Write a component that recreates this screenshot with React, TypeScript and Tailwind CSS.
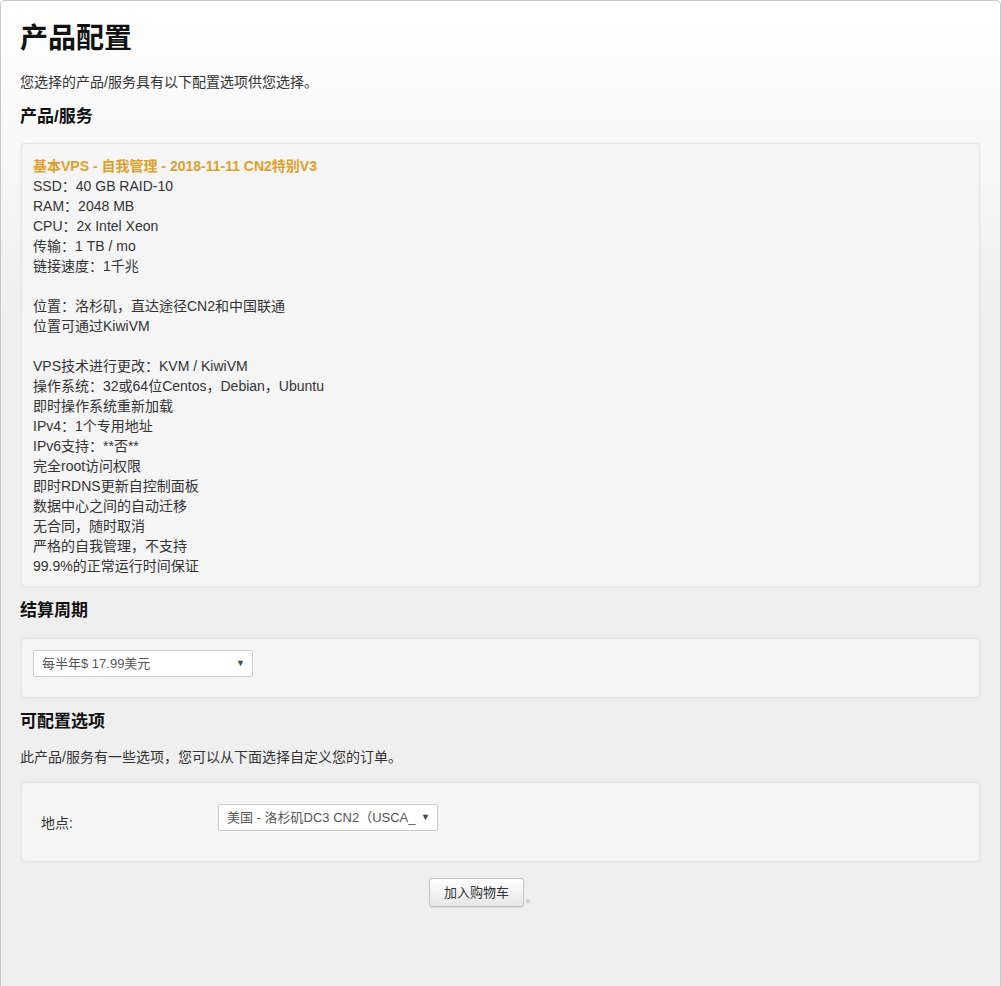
const font = { fontFamily: '"Liberation Sans", Arial, "Noto Sans CJK SC", sans-serif' };

const specs = [
  "SSD：40 GB RAID-10",
  "RAM：2048 MB",
  "CPU：2x Intel Xeon",
  "传输：1 TB / mo",
  "链接速度：1千兆",
  "",
  "位置：洛杉矶，直达途径CN2和中国联通",
  "位置可通过KiwiVM",
  "",
  "VPS技术进行更改：KVM / KiwiVM",
  "操作系统：32或64位Centos，Debian，Ubuntu",
  "即时操作系统重新加载",
  "IPv4：1个专用地址",
  "IPv6支持：**否**",
  "完全root访问权限",
  "即时RDNS更新自控制面板",
  "数据中心之间的自动迁移",
  "无合同，随时取消",
  "严格的自我管理，不支持",
  "99.9%的正常运行时间保证",
];

function FakeSelect({ value }: { value: string }) {
  return (
    <div className="flex h-[27px] w-[220px] items-center justify-between rounded-[2px] border border-[#ccc] bg-white pl-[8px] pr-[7px] text-[13px] text-[#555]">
      <span className="whitespace-nowrap">{value}</span>
      <span className="ml-1 text-[9px] text-[#444]">▼</span>
    </div>
  );
}

function Well({ className, children }: { className?: string; children: React.ReactNode }) {
  return (
    <div
      className={`mx-[1px] rounded-[4px] border border-[#e4e4e4] bg-[#f5f5f5] shadow-[0_0_2px_rgba(0,0,0,0.08)] ${className ?? ""}`}
    >
      {children}
    </div>
  );
}

export default function App() {
  return (
    <div style={font} className="min-h-[986px] w-full bg-white">
      <div className="min-h-[986px] rounded-t-[5px] border border-b-0 border-[#c8c8c8] bg-[linear-gradient(to_bottom,#ffffff_0px,#efefef_320px)] px-[19px] pt-[20px] text-[14px] text-[#333]">
        <h1 className="text-[28px] font-bold leading-[36px] text-[#111]">产品配置</h1>
        <p className="mt-[15px] leading-[20px]">您选择的产品/服务具有以下配置选项供您选择。</p>

        <h2 className="mt-[13px] text-[17px] font-bold leading-[24px] text-[#111]">产品/服务</h2>
        <Well className="mt-[14px] px-[11px] pt-[12px] pb-[10px]">
          <div className="font-bold leading-[20px] text-[#dd9f2b]">基本VPS - 自我管理 - 2018-11-11 CN2特别V3</div>
          {specs.map((s, i) => (
            <div key={i} className="h-[20px] leading-[20px]">
              {s}
            </div>
          ))}
        </Well>

        <h2 className="mt-[12px] text-[17px] font-bold leading-[24px] text-[#111]">结算周期</h2>
        <Well className="mt-[15px] px-[11px] pt-[11px] pb-[20px]">
          <FakeSelect value="每半年$ 17.99美元" />
        </Well>

        <h2 className="mt-[12px] text-[17px] font-bold leading-[24px] text-[#111]">可配置选项</h2>
        <p className="mt-[13px] leading-[20px]">此产品/服务有一些选项，您可以从下面选择自定义您的订单。</p>
        <Well className="mt-[15px] pl-[19px] pt-[21px] pb-[28px]">
          <div className="flex items-start">
            <div className="w-[177px] pt-[9px] leading-[20px]">地点:</div>
            <FakeSelect value="美国 - 洛杉矶DC3 CN2（USCA_" />
          </div>
        </Well>

        <div className="mt-[16px] flex items-end justify-center pr-[36px]">
          <button className="h-[29px] w-[95px] rounded-[3px] border border-[#c4c4c4] bg-[linear-gradient(to_bottom,#ffffff,#e6e6e6)] text-[13px] text-[#333] shadow-[0_1px_1px_rgba(0,0,0,0.08)]">
            加入购物车
          </button>
          <span className="ml-[2px] text-[10px] leading-[16px] text-[#888]">。</span>
        </div>
      </div>
    </div>
  );
}
